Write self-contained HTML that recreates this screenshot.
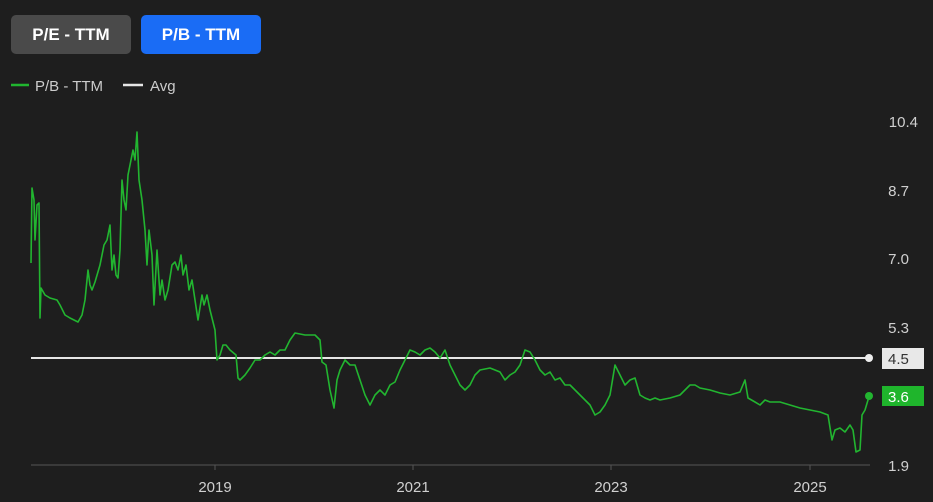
<!DOCTYPE html>
<html><head><meta charset="utf-8"><style>
body{margin:0;width:933px;height:502px;background:#1e1e1e;overflow:hidden;font-family:"Liberation Sans",sans-serif;}
.btn{position:absolute;top:15px;height:39px;width:120px;border-radius:5px;color:#fff;font-weight:bold;font-size:17px;line-height:39px;text-align:center;}
</style></head><body>
<div class="btn" style="left:11px;background:#4a4a4a;">P/E - TTM</div>
<div class="btn" style="left:141px;background:#1a6cf5;">P/B - TTM</div>
<svg width="933" height="502" style="position:absolute;left:0;top:0" font-family="Liberation Sans, sans-serif">
<line x1="11" y1="85" x2="29" y2="85" stroke="#20b52f" stroke-width="2.5"/>
<text x="35" y="91" fill="#ccc" font-size="15">P/B - TTM</text>
<line x1="123" y1="85" x2="143" y2="85" stroke="#e6e6e6" stroke-width="2.5"/>
<text x="150" y="91" fill="#ccc" font-size="15">Avg</text>
<g fill="#d0d0d0" font-size="15" text-anchor="end">
<text x="918" y="127">10.4</text><text x="909" y="196">8.7</text><text x="909" y="264">7.0</text><text x="909" y="333">5.3</text><text x="909" y="471">1.9</text>
</g>
<line x1="31" y1="465" x2="870" y2="465" stroke="#555" stroke-width="1"/>
<g stroke="#555"><line x1="215" y1="465" x2="215" y2="470"/><line x1="413" y1="465" x2="413" y2="470"/><line x1="611" y1="465" x2="611" y2="470"/><line x1="810" y1="465" x2="810" y2="470"/></g>
<g fill="#d0d0d0" font-size="15" text-anchor="middle">
<text x="215" y="492">2019</text><text x="413" y="492">2021</text><text x="611" y="492">2023</text><text x="810" y="492">2025</text>
</g>
<line x1="31" y1="358" x2="869" y2="358" stroke="#e6e6e6" stroke-width="2"/>
<circle cx="869" cy="358" r="4" fill="#eee"/>
<rect x="882" y="348" width="42" height="21" fill="#e8e8e8"/>
<text x="888" y="364" fill="#333" font-size="15">4.5</text>
<rect x="882" y="386" width="42" height="20" fill="#1fb52c"/>
<text x="888" y="402" fill="#fff" font-size="15">3.6</text>
<polyline fill="none" stroke="#22b530" stroke-width="1.6" stroke-linejoin="round" points="31,263 32,188 34,200 35,240 37,205 39,203 40,318 41,288 45,295 50,298 57,300 60,305 65,315 70,318 78,322 82,315 85,300 88,270 90,285 92,290 95,282 100,265 104,245 107,240 110,225 112,270 114,255 116,275 118,278 120,250 122,180 124,200 126,210 128,175 131,160 133,150 135,160 137,132 139,180 142,200 145,230 147,265 149,230 152,255 154,305 157,250 160,295 162,280 165,300 168,290 172,265 175,262 178,270 181,255 183,275 186,265 189,290 192,280 195,300 198,320 202,295 204,305 207,295 210,310 215,330 217,360 220,355 223,345 226,345 230,350 236,355 238,378 240,380 245,375 250,368 255,360 260,360 265,355 270,352 275,355 280,350 285,350 290,340 295,333 305,335 315,335 320,340 322,362 326,365 330,390 334,408 337,380 340,370 345,360 350,365 355,365 360,380 365,395 370,405 375,395 380,390 385,395 390,385 395,382 400,370 405,360 410,350 415,352 420,355 425,350 430,348 435,352 440,358 445,350 450,365 455,375 460,385 465,390 470,385 475,375 480,370 490,368 500,372 505,380 510,375 515,372 520,365 525,350 530,352 535,360 540,370 545,375 550,372 555,380 560,378 565,385 570,385 575,390 580,395 585,400 590,405 595,415 600,412 605,405 610,395 615,365 620,375 625,385 630,380 635,378 640,395 645,398 650,400 655,398 660,400 670,398 680,395 685,390 690,385 695,385 700,388 710,390 720,393 730,395 740,392 745,380 748,398 755,402 760,405 765,400 770,402 780,402 790,405 800,408 810,410 820,412 828,415 832,440 835,430 840,428 845,432 850,425 853,430 856,452 860,450 862,415 865,410 868,400 869,396"/>
<circle cx="869" cy="396" r="4" fill="#22b530"/>
</svg>
</body></html>
